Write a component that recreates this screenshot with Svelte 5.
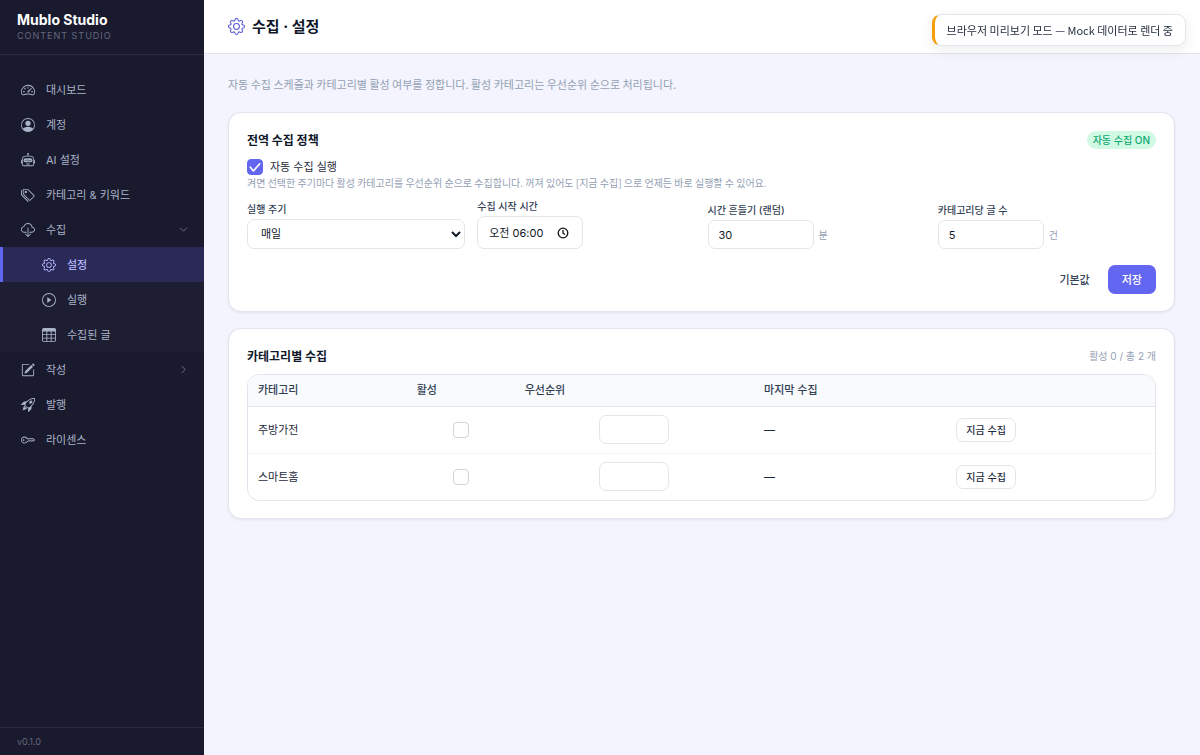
<!--
  Écran « 수집 · 설정 » : politique de collecte globale + réglages par catégorie.
  Mise en page : sidebar à gauche, barre de titre et cartes à droite.
-->
<script lang="ts">
	type IconName = keyof typeof icons

	interface NavItem {
		label:     string
		icon:      IconName
		open?:     boolean
		children?: { label: string; icon: IconName; active?: boolean }[]
	}

	// Tracés sur une grille 16x16
	const icons = {
		speedometer: [
			'M8 4a.5.5 0 0 1 .5.5V6a.5.5 0 0 1-1 0V4.5A.5.5 0 0 1 8 4M3.732 5.732a.5.5 0 0 1 .707 0l.915.914a.5.5 0 1 1-.708.708l-.914-.915a.5.5 0 0 1 0-.707M2 10a.5.5 0 0 1 .5-.5h1.586a.5.5 0 0 1 0 1H2.5A.5.5 0 0 1 2 10m9.5 0a.5.5 0 0 1 .5-.5h1.5a.5.5 0 0 1 0 1H12a.5.5 0 0 1-.5-.5m.754-4.246a.39.39 0 0 0-.527-.02L7.547 9.31a.91.91 0 1 0 1.302 1.258l3.434-4.297a.39.39 0 0 0-.029-.518z',
			'M0 10a8 8 0 1 1 15.547 2.661c-.442 1.253-1.845 1.602-2.932 1.25C11.309 13.488 9.475 13 8 13c-1.474 0-3.31.488-4.615.911-1.087.352-2.49.003-2.932-1.25A8 8 0 0 1 0 10m8-7a7 7 0 0 0-6.603 9.329c.203.575.923.876 1.68.63C4.397 12.533 6.358 12 8 12s3.604.532 4.923.96c.757.245 1.477-.056 1.68-.631A7 7 0 0 0 8 3'
		],
		person: [
			'M11 6a3 3 0 1 1-6 0 3 3 0 0 1 6 0',
			'M0 8a8 8 0 1 1 16 0A8 8 0 0 1 0 8m8-7a7 7 0 0 0-5.468 11.37C3.242 11.226 4.805 10 8 10s4.757 1.225 5.468 2.37A7 7 0 0 0 8 1'
		],
		robot: [
			'M6 12.5a.5.5 0 0 1 .5-.5h3a.5.5 0 0 1 0 1h-3a.5.5 0 0 1-.5-.5M3 8.062C3 6.76 4.235 5.765 5.53 5.886a26.6 26.6 0 0 0 4.94 0C11.765 5.765 13 6.76 13 8.062v1.157a.93.93 0 0 1-.765.935c-.845.147-2.34.346-4.235.346s-3.39-.2-4.235-.346A.93.93 0 0 1 3 9.219zm4.542-.827a.25.25 0 0 0-.217.068l-.92.9a25 25 0 0 1-1.871-.183.25.25 0 0 0-.068.495c.55.076 1.232.149 2.02.193a.25.25 0 0 0 .189-.071l.754-.736.847 1.71a.25.25 0 0 0 .404.062l.932-.97a25 25 0 0 0 1.922-.188.25.25 0 0 0-.068-.495c-.538.074-1.207.145-1.98.189a.25.25 0 0 0-.166.076l-.754.785-.842-1.7a.25.25 0 0 0-.182-.135',
			'M8.5 1.866a1 1 0 1 0-1 0V3h-2A4.5 4.5 0 0 0 1 7.5V8a1 1 0 0 0-1 1v2a1 1 0 0 0 1 1v1a2 2 0 0 0 2 2h10a2 2 0 0 0 2-2v-1a1 1 0 0 0 1-1V9a1 1 0 0 0-1-1v-.5A4.5 4.5 0 0 0 10.5 3h-2zM14 7.5V13a1 1 0 0 1-1 1H3a1 1 0 0 1-1-1V7.5A3.5 3.5 0 0 1 5.5 4h5A3.5 3.5 0 0 1 14 7.5'
		],
		tags: [
			'M3 2v4.586l7 7L14.586 9l-7-7zM2 2a1 1 0 0 1 1-1h4.586a1 1 0 0 1 .707.293l7 7a1 1 0 0 1 0 1.414l-4.586 4.586a1 1 0 0 1-1.414 0l-7-7A1 1 0 0 1 2 6.586z',
			'M5.5 5a.5.5 0 1 1 0-1 .5.5 0 0 1 0 1m0 1a1.5 1.5 0 1 0 0-3 1.5 1.5 0 0 0 0 3M1 7.086a1 1 0 0 0 .293.707L8.75 15.25l-.043.043a1 1 0 0 1-1.414 0l-7-7A1 1 0 0 1 0 7.586V3a1 1 0 0 1 1-1z'
		],
		cloud: [
			'M4.406 1.342A5.53 5.53 0 0 1 8 0c2.69 0 4.923 2 5.166 4.579C14.758 4.804 16 6.137 16 7.773 16 9.569 14.502 11 12.687 11H10a.5.5 0 0 1 0-1h2.688C13.979 10 15 8.988 15 7.773c0-1.216-1.02-2.228-2.313-2.228h-.5v-.5C12.188 2.825 10.328 1 8 1a4.53 4.53 0 0 0-2.941 1.1c-.757.652-1.153 1.438-1.153 2.055v.448l-.445.049C2.064 4.805 1 5.952 1 7.318 1 8.785 2.23 10 3.781 10H6a.5.5 0 0 1 0 1H3.781C1.708 11 0 9.366 0 7.318c0-1.763 1.266-3.223 2.942-3.593.143-.863.698-1.723 1.464-2.383',
			'M7.646 15.854a.5.5 0 0 0 .708 0l3-3a.5.5 0 0 0-.708-.708L8.5 14.293V5.5a.5.5 0 0 0-1 0v8.793l-2.146-2.147a.5.5 0 0 0-.708.708z'
		],
		gear: [
			'M8 4.754a3.246 3.246 0 1 0 0 6.492 3.246 3.246 0 0 0 0-6.492M5.754 8a2.246 2.246 0 1 1 4.492 0 2.246 2.246 0 0 1-4.492 0',
			'M9.796 1.343c-.527-1.79-3.065-1.79-3.592 0l-.094.319a.873.873 0 0 1-1.255.52l-.292-.16c-1.64-.892-3.433.902-2.54 2.541l.159.292a.873.873 0 0 1-.52 1.255l-.319.094c-1.79.527-1.79 3.065 0 3.592l.319.094a.873.873 0 0 1 .52 1.255l-.16.292c-.892 1.64.901 3.434 2.541 2.54l.292-.159a.873.873 0 0 1 1.255.52l.094.319c.527 1.79 3.065 1.79 3.592 0l.094-.319a.873.873 0 0 1 1.255-.52l.292.16c1.64.893 3.434-.902 2.54-2.541l-.159-.292a.873.873 0 0 1 .52-1.255l.319-.094c1.79-.527 1.79-3.065 0-3.592l-.319-.094a.873.873 0 0 1-.52-1.255l.16-.292c.893-1.64-.902-3.433-2.541-2.54l-.292.159a.873.873 0 0 1-1.255-.52zm-2.633.283c.246-.835 1.428-.835 1.674 0l.094.319a1.873 1.873 0 0 0 2.693 1.115l.291-.16c.764-.415 1.6.42 1.184 1.185l-.159.292a1.873 1.873 0 0 0 1.116 2.692l.318.094c.835.246.835 1.428 0 1.674l-.319.094a1.873 1.873 0 0 0-1.115 2.693l.16.291c.415.764-.42 1.6-1.185 1.184l-.291-.159a1.873 1.873 0 0 0-2.693 1.116l-.094.318c-.246.835-1.428.835-1.674 0l-.094-.319a1.873 1.873 0 0 0-2.692-1.115l-.292.16c-.764.415-1.6-.42-1.184-1.185l.159-.291A1.873 1.873 0 0 0 1.945 8.93l-.319-.094c-.835-.246-.835-1.428 0-1.674l.319-.094A1.873 1.873 0 0 0 3.06 4.377l-.16-.292c-.415-.764.42-1.6 1.185-1.184l.292.159a1.873 1.873 0 0 0 2.692-1.115z'
		],
		play: [
			'M8 15A7 7 0 1 1 8 1a7 7 0 0 1 0 14m0 1A8 8 0 1 0 8 0a8 8 0 0 0 0 16',
			'M6.271 5.055a.5.5 0 0 1 .52.038l3.5 2.5a.5.5 0 0 1 0 .814l-3.5 2.5A.5.5 0 0 1 6 10.5v-5a.5.5 0 0 1 .271-.445'
		],
		table: [
			'M0 2a2 2 0 0 1 2-2h12a2 2 0 0 1 2 2v12a2 2 0 0 1-2 2H2a2 2 0 0 1-2-2zm15 2h-4v3h4zm0 4h-4v3h4zm0 4h-4v3h3a1 1 0 0 0 1-1zm-5 3v-3H6v3zm-5 0v-3H1v2a1 1 0 0 0 1 1zm-4-4h4V8H1zm0-4h4V4H1zm5-3v3h4V4zm4 4H6v3h4z'
		],
		pencil: [
			'M15.502 1.94a.5.5 0 0 1 0 .706L14.459 3.69l-2-2L13.502.646a.5.5 0 0 1 .707 0l1.293 1.293zm-1.75 2.456-2-2L4.939 9.21a.5.5 0 0 0-.121.196l-.805 2.414a.25.25 0 0 0 .316.316l2.414-.805a.5.5 0 0 0 .196-.12z',
			'M1 13.5A1.5 1.5 0 0 0 2.5 15h11a1.5 1.5 0 0 0 1.5-1.5v-6a.5.5 0 0 0-1 0v6a.5.5 0 0 1-.5.5h-11a.5.5 0 0 1-.5-.5v-11a.5.5 0 0 1 .5-.5H9a.5.5 0 0 0 0-1H2.5A1.5 1.5 0 0 0 1 2.5z'
		],
		rocket: [
			'M9.752 6.193c.599.6 1.73.437 2.528-.362s.96-1.932.362-2.531c-.599-.6-1.73-.438-2.528.361-.798.8-.96 1.933-.362 2.532',
			'M15.811 3.312c-.363 1.534-1.334 3.626-3.64 6.218l-.24 2.408a2.56 2.56 0 0 1-.732 1.526L8.817 15.85a.51.51 0 0 1-.867-.434l.27-1.899c.04-.28-.013-.593-.131-.956a9 9 0 0 0-.249-.657l-.082-.202c-.815-.197-1.578-.662-2.191-1.277-.614-.615-1.079-1.379-1.275-2.195l-.203-.083a10 10 0 0 0-.655-.248c-.363-.119-.675-.172-.955-.132l-1.896.27A.51.51 0 0 1 .15 7.17l2.382-2.386c.41-.41.947-.67 1.524-.734h.006l2.4-.238C9.005 1.55 11.087.582 12.623.208c.89-.217 1.59-.232 2.08-.188.244.023.435.06.57.093q.1.026.16.045c.184.06.279.13.351.295l.029.073a3.5 3.5 0 0 1 .157.721c.055.485.051 1.178-.159 2.065m-4.828 7.475.04-.04-.107 1.081a1.54 1.54 0 0 1-.44.913l-1.298 1.3.054-.38c.072-.506-.034-.993-.172-1.418a9 9 0 0 0-.164-.45c.738-.065 1.462-.38 2.087-1.006M5.205 5c-.625.626-.94 1.351-1.004 2.09a9 9 0 0 0-.45-.164c-.424-.138-.91-.244-1.416-.172l-.38.054 1.3-1.3c.245-.246.566-.401.91-.44l1.08-.107zm9.406-3.961c-.38-.034-.967-.027-1.746.163-1.558.38-3.917 1.496-6.937 4.521-.62.62-.799 1.34-.687 2.051.107.676.483 1.362 1.048 1.928.564.565 1.25.941 1.924 1.049.71.112 1.429-.067 2.048-.688 3.079-3.083 4.192-5.444 4.556-6.987.183-.771.18-1.345.138-1.713a3 3 0 0 0-.045-.283 3 3 0 0 0-.3-.041Z',
			'M7.009 12.139a7.6 7.6 0 0 1-1.804-1.352A7.6 7.6 0 0 1 3.794 8.86c-1.102.992-1.965 5.054-1.839 5.18.125.126 3.936-.896 5.054-1.902Z'
		],
		key: [
			'M0 8a4 4 0 0 1 7.465-2H14a.5.5 0 0 1 .354.146l1.5 1.5a.5.5 0 0 1 0 .708l-1.5 1.5a.5.5 0 0 1-.708 0L13 9.207l-.646.647a.5.5 0 0 1-.708 0L11 9.207l-.646.647a.5.5 0 0 1-.708 0L9 9.207l-.646.647A.5.5 0 0 1 8 10h-.535A4 4 0 0 1 0 8m4-3a3 3 0 1 0 2.712 4.285A.5.5 0 0 1 7.163 9h.63l.853-.854a.5.5 0 0 1 .708 0l.646.647.646-.647a.5.5 0 0 1 .708 0l.646.647.646-.647a.5.5 0 0 1 .708 0l.646.647.793-.793-1-1h-6.63a.5.5 0 0 1-.451-.285A3 3 0 0 0 4 5',
			'M4 8a1 1 0 1 1-2 0 1 1 0 0 1 2 0'
		]
	}

	const nav: NavItem[] = $state([
		{ label: '대시보드', icon: 'speedometer' },
		{ label: '계정', icon: 'person' },
		{ label: 'AI 설정', icon: 'robot' },
		{ label: '카테고리 & 키워드', icon: 'tags' },
		{
			label: '수집',
			icon: 'cloud',
			open: true,
			children: [
				{ label: '설정', icon: 'gear', active: true },
				{ label: '실행', icon: 'play' },
				{ label: '수집된 글', icon: 'table' }
			]
		},
		{ label: '작성', icon: 'pencil', open: false, children: [] },
		{ label: '발행', icon: 'rocket' },
		{ label: '라이센스', icon: 'key' }
	])

	const defaults = { enabled: true, cycle: 'daily', start: '오전 06:00', jitter: 30, perCategory: 5 }
	let policy = $state({ ...defaults })

	let categories = $state([
		{ name: '주방가전', active: false, priority: '', last: '—' },
		{ name: '스마트홈', active: false, priority: '', last: '—' }
	])

	const activeCount = $derived(categories.filter((c) => c.active).length)

	function resetPolicy() {
		policy = { ...defaults }
	}
</script>

{#snippet icon(name: IconName)}
	<svg class="icon" viewBox="0 0 16 16" fill="currentColor" aria-hidden="true">
		{#each icons[name] as d}
			<path {d} fill-rule={name === 'person' ? 'evenodd' : 'nonzero'} />
		{/each}
	</svg>
{/snippet}

<div class="app">
	<aside class="sidebar">
		<div class="brand">
			<div class="brand__name">Mublo Studio</div>
			<div class="brand__sub">CONTENT STUDIO</div>
		</div>

		<nav class="nav">
			{#each nav as item (item.label)}
				{#if item.children}
					<button class="nav__item" aria-expanded={item.open} onclick={() => (item.open = !item.open)}>
						{@render icon(item.icon)}
						<span class="nav__label">{item.label}</span>
						<svg class="nav__chevron" viewBox="0 0 16 16" aria-hidden="true">
							<path d={item.open ? 'M2 5l6 6 6-6' : 'M5 2l6 6-6 6'} />
						</svg>
					</button>
					{#if item.open}
						<div class="nav__sub">
							{#each item.children as child (child.label)}
								<a
									href="#{child.icon}"
									class="nav__item nav__item--child"
									class:nav__item--active={child.active}
								>
									{@render icon(child.icon)}
									<span class="nav__label">{child.label}</span>
								</a>
							{/each}
						</div>
					{/if}
				{:else}
					<a href="#{item.icon}" class="nav__item">
						{@render icon(item.icon)}
						<span class="nav__label">{item.label}</span>
					</a>
				{/if}
			{/each}
		</nav>

		<div class="version">v0.1.0</div>
	</aside>

	<main class="main">
		<header class="topbar">
			{@render icon('gear')}
			<h1>수집 · 설정</h1>
		</header>

		<div class="content">
			<p class="intro">
				자동 수집 스케줄과 카테고리별 활성 여부를 정합니다. 활성 카테고리는 우선순위 순으로 처리됩니다.
			</p>

			<section class="card">
				<div class="card__head">
					<h2>전역 수집 정책</h2>
					<span class="badge">자동 수집 {policy.enabled ? 'ON' : 'OFF'}</span>
				</div>

				<label class="toggle">
					<input type="checkbox" class="check" bind:checked={policy.enabled} />
					자동 수집 실행
				</label>
				<p class="hint">
					켜면 선택한 주기마다 활성 카테고리를 우선순위 순으로 수집합니다. 꺼져 있어도 [지금 수집] 으로 언제든 바로 실행할 수 있어요.
				</p>

				<div class="fields">
					<div class="field">
						<label for="cycle">실행 주기</label>
						<select id="cycle" class="control control--select" bind:value={policy.cycle}>
							<option value="daily">매일</option>
							<option value="weekly">매주</option>
						</select>
					</div>
					<div class="field">
						<label for="start">수집 시작 시간</label>
						<div class="control control--time">
							<input id="start" type="text" bind:value={policy.start} />
							<svg viewBox="0 0 12 12" aria-hidden="true">
								<circle cx="6" cy="6" r="4.8" />
								<path d="M6 3v3.2l2 1.3" />
							</svg>
						</div>
					</div>
					<div class="field">
						<label for="jitter">시간 흔들기 (랜덤)</label>
						<div class="field__row">
							<input id="jitter" type="text" inputmode="numeric" class="control control--num" bind:value={policy.jitter} />
							<span class="unit">분</span>
						</div>
					</div>
					<div class="field">
						<label for="per-category">카테고리당 글 수</label>
						<div class="field__row">
							<input id="per-category" type="text" inputmode="numeric" class="control control--num" bind:value={policy.perCategory} />
							<span class="unit">건</span>
						</div>
					</div>
				</div>

				<div class="actions">
					<button class="btn btn--ghost" onclick={resetPolicy}>기본값</button>
					<button class="btn btn--primary">저장</button>
				</div>
			</section>

			<section class="card">
				<div class="card__head">
					<h2>카테고리별 수집</h2>
					<span class="count">활성 {activeCount} / 총 {categories.length} 개</span>
				</div>

				<div class="table-wrap">
					<table>
						<colgroup>
							<col class="col-name" />
							<col class="col-active" />
							<col class="col-priority" />
							<col class="col-last" />
							<col />
						</colgroup>
						<thead>
							<tr>
								<th>카테고리</th>
								<th>활성</th>
								<th>우선순위</th>
								<th>마지막 수집</th>
								<th></th>
							</tr>
						</thead>
						<tbody>
							{#each categories as c (c.name)}
								<tr>
									<td>{c.name}</td>
									<td class="center">
										<input type="checkbox" class="check" aria-label="{c.name} 활성" bind:checked={c.active} />
									</td>
									<td class="center">
										<input type="text" class="control control--priority" aria-label="{c.name} 우선순위" bind:value={c.priority} />
									</td>
									<td>{c.last}</td>
									<td><button class="btn btn--small">지금 수집</button></td>
								</tr>
							{/each}
						</tbody>
					</table>
				</div>
			</section>
		</div>
	</main>

	<div class="toast" role="status">브라우저 미리보기 모드 — Mock 데이터로 렌더 중</div>
</div>

<style>
	:global(body) {
		margin: 0;
		background: #f3f4fd;
	}

	.app {
		display: flex;
		min-height: 100vh;
		font-family: Inter, 'Noto Sans CJK KR', sans-serif;
		font-size: 11px;
		line-height: 16px;
		color: #1e293b;
	}
	.app * { box-sizing: border-box; }

	h1, h2, p { margin: 0; }
	button, input, select { font: inherit; color: inherit; }

	/* Textes presque entièrement en coréen : espaces plus étroites */
	h2, .intro, .hint, .toast { font-family: 'Noto Sans CJK KR', sans-serif; }

	.icon {
		width: 14px;
		height: 14px;
		flex-shrink: 0;
	}

	/* Sidebar */
	.sidebar {
		display: flex;
		flex-direction: column;
		flex: 0 0 204px;
		background: #1a1a2e;
		color: #a9b4c8;
	}
	.brand {
		padding: 12px 17px;
		height: 55px;
		border-bottom: 1px solid #2b2b3f;
	}
	.brand__name {
		font-size: 14px;
		font-weight: 700;
		color: #fff;
	}
	.brand__sub {
		font-size: 9px;
		letter-spacing: 1px;
		color: #64677c;
	}

	.nav {
		flex: 1;
		padding: 17px 0;
	}
	.nav__item {
		display: flex;
		align-items: center;
		gap: 11px;
		width: 100%;
		height: 35px;
		padding: 0 16px 0 18px;
		border: 0;
		border-left: 3px solid transparent;
		background: none;
		color: inherit;
		text-align: left;
		text-decoration: none;
		cursor: pointer;
	}
	.nav__label { flex: 1; }
	.nav__chevron {
		width: 9px;
		height: 9px;
		fill: none;
		stroke: #747b90;
		stroke-width: 1.6;
	}
	.nav__sub { background: #1e1e33; }
	.nav__item--child { padding-left: 39px; }
	.nav__item--active {
		background: #2b2955;
		border-left-color: #6366f1;
		color: #b4b6ff;
		font-weight: 500;
	}

	.version {
		padding: 6px 17px 5px;
		border-top: 1px solid #2b2b3f;
		font-size: 9px;
		color: #64677c;
	}

	/* Contenu */
	.main {
		flex: 1;
		min-width: 0;
	}
	.topbar {
		display: flex;
		align-items: center;
		gap: 7px;
		height: 54px;
		padding: 0 24px;
		background: #fff;
		border-bottom: 1px solid #e2e5ee;
	}
	.topbar .icon {
		width: 17px;
		height: 17px;
		color: #5b5bd6;
	}
	h1 {
		font-size: 15px;
		line-height: 20px;
		font-weight: 700;
		color: #0f172a;
	}
	.content {
		display: flex;
		flex-direction: column;
		gap: 16px;
		padding: 22px 25px 22px 24px;
	}
	.intro {
		margin-bottom: 4px;
		color: #94a0b4;
	}

	.card {
		padding: 17px 18px;
		background: #fff;
		border: 1px solid #e2e5ee;
		border-radius: 13px;
		box-shadow: 0 1px 3px rgba(15, 23, 42, 0.07);
	}
	.card__head {
		display: flex;
		align-items: center;
		justify-content: space-between;
		height: 19px;
	}
	h2 {
		font-size: 12px;
		font-weight: 700;
		color: #0f172a;
	}
	.badge {
		padding: 1px 6px;
		border-radius: 10px;
		background: #d1fae5;
		color: #10a871;
		font-size: 10px;
		line-height: 16px;
		font-weight: 500;
	}
	.count {
		font-size: 10px;
		color: #94a0b4;
	}

	.toggle {
		display: flex;
		align-items: center;
		gap: 7px;
		margin-top: 10px;
	}
	.check {
		appearance: none;
		width: 16px;
		height: 16px;
		margin: 0;
		border: 1px solid #cfd4dd;
		border-radius: 4px;
		background: #fff center / 16px no-repeat;
		vertical-align: middle;
	}
	.check:checked {
		border-color: #6366f1;
		background-color: #6366f1;
		background-image: url("data:image/svg+xml,%3Csvg xmlns='http://www.w3.org/2000/svg' viewBox='0 0 20 20'%3E%3Cpath fill='none' stroke='%23fff' stroke-linecap='round' stroke-linejoin='round' stroke-width='2' d='m4 10 4 5 8-9'/%3E%3C/svg%3E");
	}
	.hint {
		font-size: 10px;
		color: #94a0b4;
	}

	.fields {
		display: grid;
		grid-template-columns: repeat(4, 1fr);
		align-items: end;
		gap: 12px;
		margin-top: 7px;
	}
	.field label {
		display: block;
		margin-bottom: 2px;
		font-size: 10px;
		font-weight: 500;
		color: #334155;
	}
	.field__row {
		display: flex;
		align-items: center;
		gap: 5px;
	}
	.unit {
		font-size: 10px;
		color: #94a0b4;
	}
	.control {
		display: block;
		height: 29px;
		padding: 0 10px;
		border: 1px solid #e2e5ea;
		border-radius: 7px;
		background: #fff;
		color: #111827;
	}
	.control--select {
		width: 100%;
		height: 30px;
		padding: 0 3px 0 9px;
	}
	.control--time {
		display: flex;
		align-items: center;
		width: 106px;
		height: 33px;
		padding: 0 13px 0 11px;
	}
	.control--time input {
		flex: 1;
		min-width: 0;
		padding: 0;
		border: 0;
		outline: 0;
		background: none;
	}
	.control--time svg {
		width: 12px;
		height: 12px;
		fill: none;
		stroke: #111;
		stroke-width: 1.3;
	}
	.control--num { width: 106px; }
	.control--priority {
		width: 70px;
		margin: 0 auto;
	}

	.actions {
		display: flex;
		justify-content: flex-end;
		gap: 4px;
		margin-top: 16px;
	}
	.btn {
		height: 29px;
		padding: 0 13px;
		border: 1px solid transparent;
		border-radius: 7px;
		background: none;
		font-weight: 500;
		cursor: pointer;
	}
	.btn--ghost { color: #334155; }
	.btn--primary {
		background: #6366f1;
		color: #fff;
	}
	.btn--small {
		height: 24px;
		padding: 0 9px;
		border-color: #e2e5ea;
		background: #fff;
		font-size: 10px;
	}

	.table-wrap {
		margin-top: 9px;
		border: 1px solid #e2e5ee;
		border-radius: 12px;
		overflow: hidden;
	}
	table {
		width: 100%;
		border-collapse: collapse;
		table-layout: fixed;
	}
	.col-name     { width: 17.5%; }
	.col-active   { width: 11.9%; }
	.col-priority { width: 26.4%; }
	.col-last     { width: 21.2%; }
	th {
		height: 31px;
		padding: 0 10px;
		background: #f8fafc;
		border-bottom: 1px solid #e2e5ee;
		font-weight: 500;
		text-align: left;
		color: #334155;
	}
	td {
		height: 47px;
		padding: 0 10px;
		border-bottom: 1px solid #f3f5f8;
	}
	tbody tr:last-child td { border-bottom: 0; }
	.center { text-align: center; }

	.toast {
		position: fixed;
		top: 14px;
		right: 14px;
		padding: 7px 12px;
		background: #fff;
		border: 1px solid #e2e5ee;
		border-left: 3px solid #f59e0b;
		border-radius: 9px;
		box-shadow: 0 4px 14px rgba(15, 23, 42, 0.08);
	}
</style>
